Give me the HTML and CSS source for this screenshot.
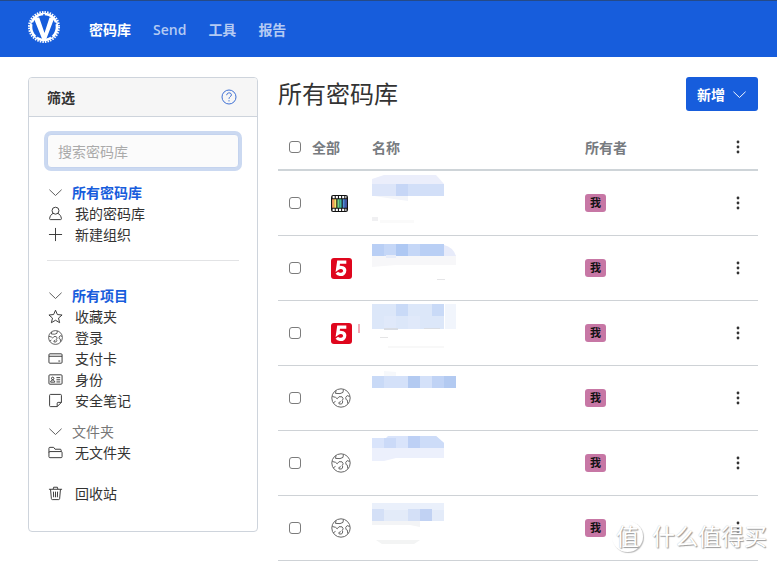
FILE: index.html
```
<!DOCTYPE html>
<html lang="zh-CN">
<head>
<meta charset="utf-8">
<title>密码库</title>
<link rel="stylesheet" href="styles.css">
</head>
<body>
<svg class="defs" aria-hidden="true">
  <symbol id="chevron" viewBox="0 0 16 16"><path d="M1.5 5 8 11.2 14.500 5"/></symbol>
  <symbol id="user" viewBox="0 0 16 16"><circle cx="8" cy="5" r="3.700"/><path d="M5.600 7.800C3.500 8.700 2 10.700 1.700 13.500q0 1 1 1h10.600q1 0 1-1C14 10.700 12.500 8.700 10.400 7.800"/></symbol>
  <symbol id="plus" viewBox="0 0 16 16"><path d="M8 1v14M1 8h14"/></symbol>
  <symbol id="star" viewBox="0 0 16 16"><path d="m8 1.300 2 4.600 5 .5-3.800 3.300 1.200 4.900L8 12l-4.400 2.600 1.200-4.900L1 6.400l5-.5z"/></symbol>
  <symbol id="globe" viewBox="0 0 20 20"><circle cx="10" cy="10" r="9.200"/><path class="land" d="M5 2.600 4.500 5.400l4.500.2 3-1.200.4-3M1.300 8.500l3.200.8 1.700 1.500 1.800-2.100 3 .1 1.200 2-1 1.700.6 1.500-1.200 2H8.200l-.4-1.400 2-1M18.600 8.500l-2.400-.9-1.500 1.800.4 2.200 1.400.7.200 3.300M2.200 14.800l2.300-1.400"/></symbol>
  <symbol id="card" viewBox="0 0 16 16"><rect x="1" y="3" width="14" height="10" rx="1"/><path d="M1 5.600h14M11 10.700h2"/></symbol>
  <symbol id="idcard" viewBox="0 0 16 16"><rect x="1" y="3" width="14" height="10" rx="1"/><circle cx="5" cy="6.800" r="1.300"/><path d="M2.800 10.800c.2-3 4.200-3 4.400 0zM9 6h4M9 8.300h4M9 10.600h4"/></symbol>
  <symbol id="note" viewBox="0 0 16 16"><path d="M2.700 1.500h10.600q1 0 1 1V10l-4.500 4.500H2.700q-1 0-1-1v-11q0-1 1-1zM9.800 14.500V11q0-1 1-1h3.500"/></symbol>
  <symbol id="folder" viewBox="0 0 16 16"><path d="M1 12.500v-9q0-1 1-1h4l1.500 2H13q1 0 1 1V7M1 12.500q0 1 1 1h12q1 0 1-1V8q0-1-1-1H2Q1 7 1 8"/></symbol>
  <symbol id="trash" viewBox="0 0 16 16"><path d="M1 3.500h14M5.500 3.300l.5-2h4l.5 2M2.700 3.500l.9 10q.1 1 1 1h6.800q.9 0 1-1l.9-10M5.800 6l.2 6M8 6v6M10.200 6 10 12"/></symbol>
  <symbol id="dots" viewBox="0 0 4 14"><circle cx="2" cy="2" r="1.400"/><circle cx="2" cy="7" r="1.400"/><circle cx="2" cy="12" r="1.400"/></symbol>
  <symbol id="five" viewBox="0 0 21 21"><rect width="21" height="21" rx="3" fill="#df061d"/><path d="M15.300 4.200H7.600l-.9 6.300q2.300-1.700 5-.7 2.700 1.300 1.800 4-1.200 3-4.500 2.600-2-.2-3.200-1.700" fill="none" stroke="#fff" stroke-width="3.200"/></symbol>
</svg>

<header class="topbar">
  <a class="logo" href="#" aria-label="首页">
    <svg viewBox="0 0 32 32" width="32" height="32">
      <circle cx="16" cy="16" r="15" fill="none" stroke="#fff" stroke-width="2" stroke-dasharray="1.500 1.120"/>
      <circle cx="16" cy="16" r="13" fill="none" stroke="#fff" stroke-width="2.600"/>
      <path d="M5.500 6.500h5.700L16.500 22l5-15.500h5L18.300 28h-4.200z" fill="#fff"/>
      <g fill="#175ddc"><circle cx="16" cy="4" r="1"/><circle cx="4.500" cy="12.500" r="1"/><circle cx="27.500" cy="12.500" r="1"/><circle cx="8.500" cy="25.500" r="1"/><circle cx="23.500" cy="25.500" r="1"/></g>
    </svg>
  </a>
  <nav class="nav">
    <a class="active" href="#">密码库</a>
    <a href="#">Send</a>
    <a href="#">工具</a>
    <a href="#">报告</a>
  </nav>
</header>

<div class="page">
  <aside class="filters">
    <div class="filters-head">
      <h2>筛选</h2>
      <a href="#" aria-label="帮助"><svg class="help" viewBox="0 0 16 16" width="16" height="16"><circle cx="8" cy="8" r="7"/><path d="M5.700 6.200C5.700 3 10.600 3.200 10.400 6 10.200 7.700 8 7.800 8 9.800M8 11.200v1.200"/></svg></a>
    </div>
    <div class="filters-body">
      <input class="search" type="search" placeholder="搜索密码库" aria-label="搜索密码库">
      <section class="group">
        <h3><svg class="icon"><use href="#chevron"/></svg><a class="current" href="#">所有密码库</a></h3>
        <ul>
          <li><a href="#"><svg class="icon"><use href="#user"/></svg>我的密码库</a></li>
          <li><a href="#"><svg class="icon"><use href="#plus"/></svg>新建组织</a></li>
        </ul>
      </section>
      <hr>
      <section class="group">
        <h3><svg class="icon"><use href="#chevron"/></svg><a class="current" href="#">所有项目</a></h3>
        <ul>
          <li><a href="#"><svg class="icon"><use href="#star"/></svg>收藏夹</a></li>
          <li><a href="#"><svg class="icon"><use href="#globe"/></svg>登录</a></li>
          <li><a href="#"><svg class="icon"><use href="#card"/></svg>支付卡</a></li>
          <li><a href="#"><svg class="icon"><use href="#idcard"/></svg>身份</a></li>
          <li><a href="#"><svg class="icon"><use href="#note"/></svg>安全笔记</a></li>
        </ul>
      </section>
      <section class="group folders">
        <h3><svg class="icon"><use href="#chevron"/></svg><span>文件夹</span></h3>
        <ul>
          <li><a href="#"><svg class="icon"><use href="#folder"/></svg>无文件夹</a></li>
        </ul>
      </section>
      <ul class="trash">
        <li><a href="#"><svg class="icon"><use href="#trash"/></svg>回收站</a></li>
      </ul>
    </div>
  </aside>

  <main class="vault">
    <div class="title">
      <h1>所有密码库</h1>
      <button class="add" type="button">新增<svg class="icon"><use href="#chevron"/></svg></button>
    </div>
    <table>
      <colgroup><col class="c-check"><col class="c-icon"><col><col class="c-owner"><col class="c-menu"></colgroup>
      <thead>
        <tr>
          <th><input type="checkbox" id="all"></th>
          <th><label for="all">全部</label></th>
          <th>名称</th>
          <th>所有者</th>
          <th><button class="menu" type="button" aria-label="选项"><svg><use href="#dots"/></svg></button></th>
        </tr>
      </thead>
      <tbody>
        <tr>
          <td><input type="checkbox" aria-label="选择项目 1"></td>
          <td class="site"><svg width="17" height="17" viewBox="0 0 16 16"><rect width="16" height="16" rx="2" fill="#111"/><path fill="#f39a5b" d="M1 4h2v8H1z"/><path fill="#f8e56b" d="M3 4h2v8H3z"/><path fill="#70cf83" d="M6 4h2v8H6z"/><path fill="#43b69c" d="M8 4h2v8H8z"/><path fill="#4e91dc" d="M11 4h2v8h-2z"/><path fill="#4355a5" d="M13 4h2v8h-2z"/><path d="M1.500 2h13M1.500 14h13" stroke="#fff" stroke-width="2" stroke-dasharray="2 1"/></svg></td>
          <td><svg class="masked" viewBox="0 0 90 60"><path fill="#ebeefb" d="M0 6 12 2h52l8 9H0z"/><path fill="#dce5f9" d="M0 11h36v12H0z"/><path fill="#c6d6f6" d="M24 11h12v12H24z"/><path fill="#d2dff8" d="M36 11h36v12H36z"/><path fill="#f3f5fa" d="M2 23h34v5l-14-2z"/><path fill="#f0f0f2" d="M0 44h6v4H0z"/><path fill="#fafafa" d="M8 47h34v3H8z"/></svg></td>
          <td><span class="badge">我</span></td>
          <td><button class="menu" type="button" aria-label="选项"><svg><use href="#dots"/></svg></button></td>
        </tr>
        <tr>
          <td><input type="checkbox" aria-label="选择项目 2"></td>
          <td class="site"><svg width="21" height="21"><use href="#five"/></svg></td>
          <td><svg class="masked" viewBox="0 0 90 60"><path fill="#b9cff5" d="M0 6h72v12H0z"/><path fill="#c5d7f7" d="M12 6h12v12H12zM36 6h12v12H36z"/><path fill="#aec8f3" d="M24 6h12v12H24z"/><path fill="#e7ebfa" d="M72 7q9 2 12 11H72z"/><path fill="#f7f7f9" d="M0 18h84v9H24L0 29z"/><path fill="#e8edf9" d="M14 17h10v3H14z"/><path fill="#e5e5e7" d="M65 41h8v1h-8z"/></svg></td>
          <td><span class="badge">我</span></td>
          <td><button class="menu" type="button" aria-label="选项"><svg><use href="#dots"/></svg></button></td>
        </tr>
        <tr>
          <td><input type="checkbox" aria-label="选择项目 3"></td>
          <td class="site"><svg width="29" height="21"><use href="#five" width="21" height="21"/><path fill="#f2aeb9" d="M27 1h2v9h-2z"/></svg></td>
          <td><svg class="masked" viewBox="0 0 90 60"><path fill="#dce7f9" d="M0 1h72v25H0z"/><path fill="#c9daf7" d="M24 1h12v12H24zM60 1h12v12H60z"/><path fill="#e0e9fa" d="M12 13h12v13H12zM36 13h12v13H36z"/><path fill="#f1f5fc" d="M73 1h11v25H73z"/><path fill="#d9dde4" d="M12 25h14v2H12zM52 25h16v1H52z"/><path fill="#e5e5e6" d="M8 34h8v1H8z"/><path fill="#f8f8f8" d="M16 43h56v2H16z"/></svg></td>
          <td><span class="badge">我</span></td>
          <td><button class="menu" type="button" aria-label="选项"><svg><use href="#dots"/></svg></button></td>
        </tr>
        <tr>
          <td><input type="checkbox" aria-label="选择项目 4"></td>
          <td class="site"><svg class="globe" width="20" height="20"><use href="#globe"/></svg></td>
          <td><svg class="masked" viewBox="0 0 90 60"><path fill="#d4e1f9" d="M0 8h84v12H0z"/><path fill="#c9daf7" d="M0 8h12v12H0z"/><path fill="#b3caf1" d="M36 8h12v12H36zM72 8h12v12H72z"/><path fill="#c0d3f5" d="M60 8h12v12H60z"/><path fill="#f6f8fb" d="M12 3l12 1v4H12z"/></svg></td>
          <td><span class="badge">我</span></td>
          <td><button class="menu" type="button" aria-label="选项"><svg><use href="#dots"/></svg></button></td>
        </tr>
        <tr>
          <td><input type="checkbox" aria-label="选择项目 5"></td>
          <td class="site"><svg class="globe" width="20" height="20"><use href="#globe"/></svg></td>
          <td><svg class="masked" viewBox="0 0 90 60"><path fill="#d9e4fb" d="M0 5h14l2-2h48l8 7v5H0z"/><path fill="#cbdaf8" d="M12 5h12v10H12z"/><path fill="#bdd0f5" d="M36 3h12v12H36z"/><path fill="#cddcf8" d="M48 3h16l8 7v5H48z"/><path fill="#ecf0fc" d="M0 15h72v10H24L12 28H0z"/></svg></td>
          <td><span class="badge">我</span></td>
          <td><button class="menu" type="button" aria-label="选项"><svg><use href="#dots"/></svg></button></td>
        </tr>
        <tr>
          <td><input type="checkbox" aria-label="选择项目 6"></td>
          <td class="site"><svg class="globe" width="20" height="20"><use href="#globe"/></svg></td>
          <td><svg class="masked" viewBox="0 0 90 60"><path fill="#eaf0fb" d="M0 5h72v7H0z"/><path fill="#e3ebf9" d="M0 12h72v11H0z"/><path fill="#d4e0f7" d="M0 11h12v12H0zM36 11h12v12H36z"/><path fill="#c1d2f3" d="M48 11h12v12H48z"/><path fill="#f3f4f6" d="M0 23h48v6l-10-2H0z"/><path fill="#f3f4f4" d="M4 42h44l-6 4H10z"/></svg></td>
          <td><span class="badge">我</span></td>
          <td><button class="menu" type="button" aria-label="选项"><svg><use href="#dots"/></svg></button></td>
        </tr>
      </tbody>
    </table>
  </main>
</div>
<div class="watermark"><span class="seal">值</span><span>什么值得买</span></div>
</body>
</html>
```

FILE: styles.css
```
* { box-sizing: border-box; }

body {
  margin: 0;
  position: relative;
  background: #fff;
  color: #333;
  font: 14px/21px "Open Sans", "Noto Sans CJK SC", sans-serif;
}

h1, h2, h3, ul { margin: 0; padding: 0; font-weight: 400; }
ul { list-style: none; }
a { color: inherit; text-decoration: none; }
button, input { font: inherit; margin: 0; }
.defs { position: absolute; width: 0; height: 0; }

.icon {
  width: 15px;
  height: 15px;
  flex: none;
  fill: none;
  stroke: currentColor;
  stroke-width: 1;
}

.land { stroke-width: 1; }

.topbar {
  display: flex;
  align-items: center;
  gap: 29px;
  height: 57px;
  padding: 0 28px;
  background: #175ddc;
  border-top: 1px solid #254a88;
}

.logo { display: flex; padding-bottom: 4px; }
.nav { display: flex; gap: 22px; font-weight: 600; color: #b4caf3; }
.nav .active { color: #fff; font-weight: 700; }

.page {
  display: flex;
  align-items: flex-start;
  gap: 20px;
  padding: 20px 19px 0 28px;
}

.filters {
  flex: 0 0 230px;
  border: 1px solid #ced4dc;
  border-radius: 4px;
  overflow: hidden;
}

.filters-head {
  display: flex;
  align-items: center;
  justify-content: space-between;
  height: 39px;
  padding: 0 20px 0 18px;
  background: #f6f6f6;
  border-bottom: 1px solid #ced4dc;
}

.filters-head h2 { font-size: 14px; font-weight: 700; }
.filters-head a { display: flex; }
.help { fill: none; stroke: #3f71d4; }
.filters-body { padding: 17px 18px 27px; }

.search {
  display: block;
  width: 100%;
  height: 34px;
  margin-bottom: 13px;
  padding: 0 10px;
  color: #333;
  background: #fbfbfb;
  border: 1px solid #c4d3ee;
  border-radius: 4px;
  outline: 0;
  box-shadow: 0 0 0 3px #cbd9f1;
}

.search::placeholder { color: #aaa; opacity: 1; }

.group h3 {
  display: flex;
  align-items: center;
  gap: 9px;
  height: 22px;
  padding-left: 1px;
  font-size: 14px;
  color: #555;
}

.group h3 span { color: #777; }
.group .current { color: #175ddc; font-weight: 700; }

.filters li a {
  display: flex;
  align-items: center;
  gap: 12px;
  height: 21px;
  padding-left: 1px;
}

.filters hr {
  height: 1px;
  margin: 15px 0 23px;
  border: 0;
  background: #e2e3e5;
}

.folders { margin-top: 9px; }
.trash { margin-top: 20px; }

.vault { flex: 1; min-width: 0; }

.title {
  display: flex;
  align-items: center;
  justify-content: space-between;
  height: 34px;
  margin-bottom: 14px;
}

.title h1 { font-size: 24px; line-height: 34px; }

.add {
  display: flex;
  align-items: center;
  gap: 7px;
  height: 34px;
  padding: 0 11px;
  color: #fff;
  font-weight: 700;
  background: #175ddc;
  border: 0;
  border-radius: 3px;
}

table {
  width: 100%;
  table-layout: fixed;
  border-spacing: 0;
}

.c-check { width: 34px; }
.c-icon { width: 60px; }
.c-owner { width: 133px; }
.c-menu { width: 40px; }

th, td { padding: 0; vertical-align: middle; text-align: left; }

th {
  height: 46px;
  color: #777b80;
  font-weight: 700;
  border-bottom: 2px solid #ced4d8;
}

td { height: 65px; border-bottom: 1px solid #ced2d6; }
td > svg { display: block; }
.site { padding-left: 19px; }
.masked { width: 90px; height: 60px; }
.globe { fill: none; stroke: #666; stroke-width: 1; }

input[type="checkbox"] {
  appearance: none;
  display: block;
  width: 12px;
  height: 12px;
  margin-left: 11px;
  background: #fff;
  border: 1px solid #7c7c7c;
  border-radius: 3px;
}

.badge {
  display: block;
  width: 21px;
  height: 18px;
  border-radius: 3px;
  background: #c777a5;
  color: #111;
  font-size: 11px;
  line-height: 18px;
  font-weight: 700;
  text-align: center;
}

.menu {
  display: flex;
  align-items: center;
  justify-content: center;
  width: 100%;
  height: 24px;
  padding: 0;
  border: 0;
  background: none;
}

.menu svg { width: 4px; height: 14px; fill: #333; }

.watermark {
  position: absolute;
  right: 10px;
  bottom: 9px;
  display: flex;
  align-items: center;
  gap: 9px;
  color: #fff;
  font-size: 23px;
  line-height: 32px;
  text-shadow: 1px 1px 1px #999, 0 0 1px #bbb;
  pointer-events: none;
}

.seal {
  width: 31px;
  height: 31px;
  border-radius: 50%;
  box-shadow: 1px 1px 1px #bbb;
  line-height: 30px;
  text-align: center;
}
```
